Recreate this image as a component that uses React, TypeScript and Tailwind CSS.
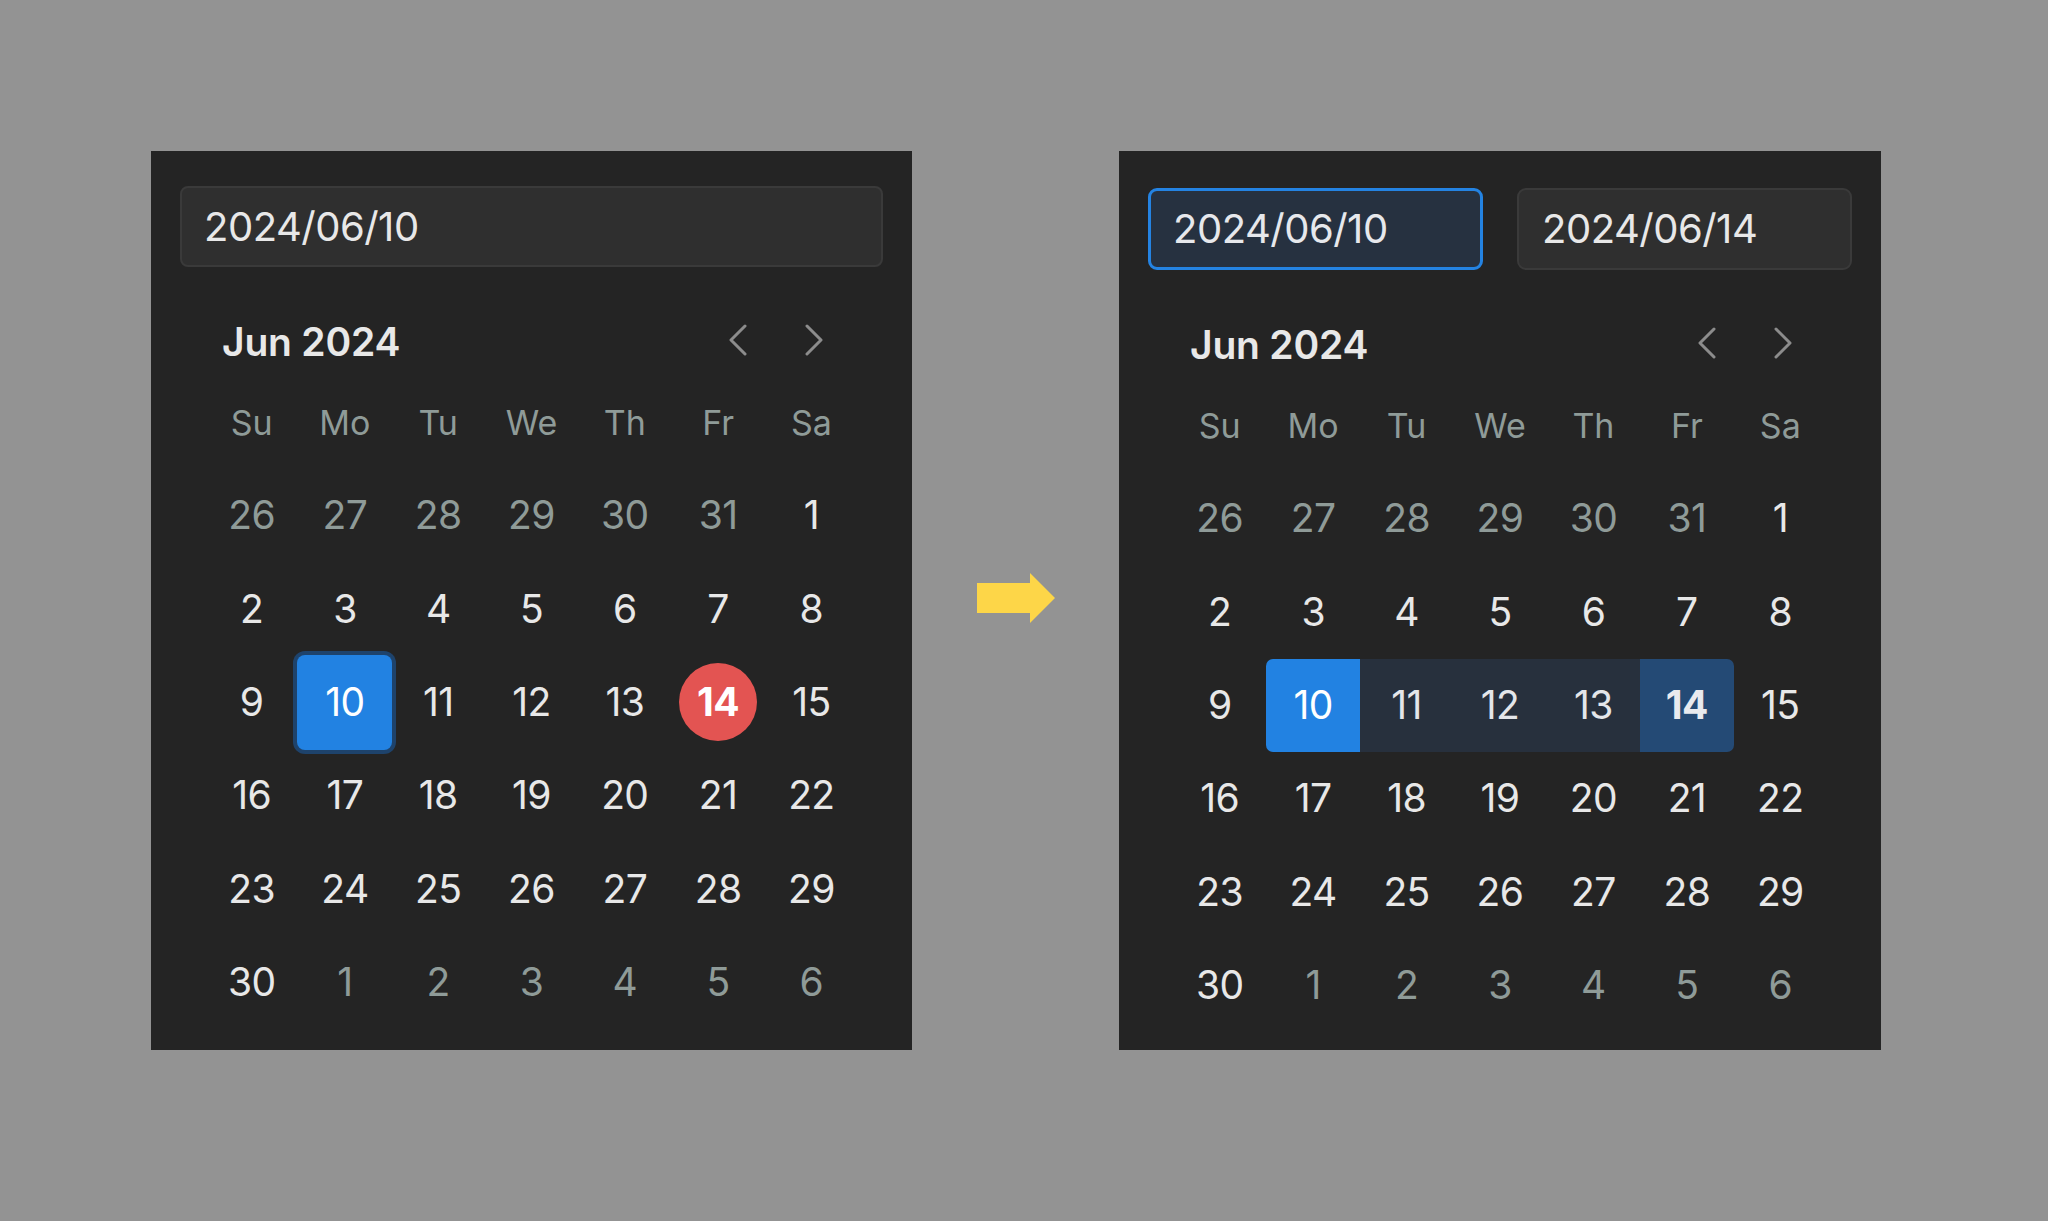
const weekdays = ["Su", "Mo", "Tu", "We", "Th", "Fr", "Sa"];

type Day = { n: number; muted?: boolean };

const days: Day[] = [
  ...[26, 27, 28, 29, 30, 31].map((n) => ({ n, muted: true })),
  ...Array.from({ length: 30 }, (_, i) => ({ n: i + 1 })),
  ...[1, 2, 3, 4, 5, 6].map((n) => ({ n, muted: true })),
];

const font = { fontFamily: "Inter, 'Noto Sans', sans-serif" };

function Chevron({ dir }: { dir: "left" | "right" }) {
  return (
    <svg width="20" height="32" viewBox="0 0 20 32" fill="none">
      <polyline
        points={dir === "left" ? "17,2 3,16 17,30" : "3,2 17,16 3,30"}
        stroke="#8c8c8c"
        strokeWidth="3"
        strokeLinecap="round"
        strokeLinejoin="round"
      />
    </svg>
  );
}

function Header() {
  return (
    <div className="mt-[45px] flex h-[60px] items-center justify-between pl-[17px] pr-[24px]">
      <span className="text-[39px] font-semibold tracking-[-0.2px] text-[#e8e8e8]">Jun 2024</span>
      <div className="-mt-[4px] flex gap-[36px]">
        <button className="flex w-[40px] justify-center">
          <Chevron dir="left" />
        </button>
        <button className="flex w-[40px] justify-center">
          <Chevron dir="right" />
        </button>
      </div>
    </div>
  );
}

function Weekdays() {
  return (
    <div className="mt-[4px] grid grid-cols-7">
      {weekdays.map((w) => (
        <div key={w} className="flex h-[93px] items-center justify-center text-[34px] text-[#8f9b98]">
          {w}
        </div>
      ))}
    </div>
  );
}

const cell = "flex h-[93.3px] items-center justify-center text-[39px] tracking-[-0.6px]";

function SingleGrid() {
  return (
    <div className="grid grid-cols-7">
      {days.map((d, i) => {
        if (!d.muted && d.n === 10) {
          return (
            <div key={i} className={cell}>
              <span className="flex h-[95px] w-[95px] shrink-0 items-center justify-center rounded-[8px] bg-[#2282e2] text-white shadow-[0_0_0_4px_#1e436c]">
                10
              </span>
            </div>
          );
        }
        if (!d.muted && d.n === 14) {
          return (
            <div key={i} className={cell}>
              <span className="flex h-[78px] w-[78px] items-center justify-center rounded-full bg-[#e35452] font-bold text-white">
                14
              </span>
            </div>
          );
        }
        return (
          <div key={i} className={`${cell} ${d.muted ? "text-[#8f9b98]" : "text-[#e8e8e8]"}`}>
            {d.n}
          </div>
        );
      })}
    </div>
  );
}

function RangeGrid() {
  return (
    <div className="grid grid-cols-7">
      {days.map((d, i) => {
        if (!d.muted && d.n === 10)
          return (
            <div key={i} className={`${cell} rounded-l-[7px] bg-[#2282e2] text-white`}>
              10
            </div>
          );
        if (!d.muted && d.n > 10 && d.n < 14)
          return (
            <div key={i} className={`${cell} bg-[#27303d] text-[#e4e6ea]`}>
              {d.n}
            </div>
          );
        if (!d.muted && d.n === 14)
          return (
            <div key={i} className={`${cell} rounded-r-[7px] bg-[#244a75] font-bold text-[#e8eaee]`}>
              14
            </div>
          );
        return (
          <div key={i} className={`${cell} ${d.muted ? "text-[#8f9b98]" : "text-[#e8e8e8]"}`}>
            {d.n}
          </div>
        );
      })}
    </div>
  );
}

function Arrow() {
  return (
    <svg width="78" height="50" viewBox="0 0 78 50">
      <polygon points="0,10 53,10 53,0 78,25 53,50 53,40 0,40" fill="#fdd648" />
    </svg>
  );
}

export default function App() {
  return (
    <div className="flex h-[1221px] w-full bg-[#939393] pl-[151px] pt-[151px]" style={font}>
      {/* single date picker */}
      <div className="h-[899px] w-[761px] bg-[#242424] px-[29px] pt-[35px]">
        <div className="flex h-[81px] items-center rounded-[8px] border-2 border-[#3a3a3a] bg-[#2f2f2f] px-[22px] text-[40px] tracking-[-0.5px] text-[#e8e8e8]">
          2024/06/10
        </div>
        <div className="px-[25px]">
          <Header />
          <Weekdays />
          <SingleGrid />
        </div>
      </div>

      <div className="flex h-[899px] w-[207px] items-center justify-center pb-[5px]">
        <Arrow />
      </div>

      {/* range picker */}
      <div className="h-[899px] w-[762px] bg-[#242424] px-[29px] pt-[37px]">
        <div className="grid grid-cols-2 gap-[34px]">
          <div className="flex h-[82px] items-center rounded-[9px] border-[3px] border-[#2483e2] bg-[#263140] px-[22px] text-[40px] tracking-[-0.5px] text-[#e6e8ec]">
            2024/06/10
          </div>
          <div className="flex h-[82px] items-center rounded-[9px] border-2 border-[#3a3a3a] bg-[#2f2f2f] px-[23px] text-[40px] tracking-[-0.5px] text-[#e8e8e8]">
            2024/06/14
          </div>
        </div>
        <div className="px-[25px]">
          <Header />
          <Weekdays />
          <RangeGrid />
        </div>
      </div>
    </div>
  );
}
